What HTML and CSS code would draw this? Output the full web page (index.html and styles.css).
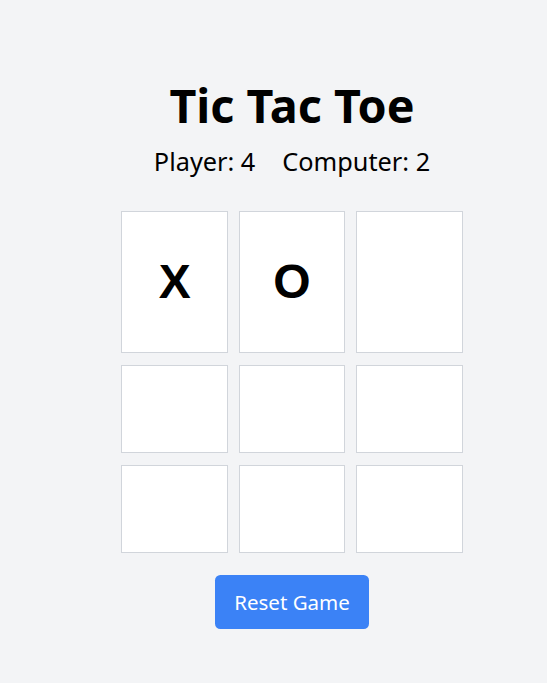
FILE: index.html
```html
<!DOCTYPE html>
<html lang="en">
<head>
<meta charset="utf-8">
<title>Tic Tac Toe</title>
<link rel="stylesheet" href="styles.css">
</head>
<body>
<main class="app">
  <h1 class="title">Tic Tac Toe</h1>
  <div class="score">
    <span class="score-item">Player: 4</span>
    <span class="score-item">Computer: 2</span>
  </div>
  <div class="board">
    <button class="cell">X</button>
    <button class="cell">O</button>
    <button class="cell"></button>
    <button class="cell"></button>
    <button class="cell"></button>
    <button class="cell"></button>
    <button class="cell"></button>
    <button class="cell"></button>
    <button class="cell"></button>
  </div>
  <button class="reset">Reset Game</button>
</main>
</body>
</html>
```

FILE: styles.css
```css
html, body {
  margin: 0;
  padding: 0;
  background: #f3f4f6;
  height: 100%;
}

body {
  font-family: "Noto Sans", "Open Sans", sans-serif;
  color: #000;
}

.app {
  display: flex;
  flex-direction: column;
  align-items: center;
  padding: 79.4px 0 0 37px;
}

.title {
  margin: 0 0 10.7px;
  font-size: 46.7px;
  line-height: 53px;
  font-weight: 700;
}

.score {
  display: flex;
  gap: 27px;
  font-size: 25.3px;
  line-height: 37.33px;
  margin-bottom: 30.5px;
}

.board {
  display: grid;
  grid-template-columns: repeat(3, 106.67px);
  column-gap: 10.67px;
  row-gap: 11.4px;
}

.cell {
  box-sizing: border-box;
  width: 106.67px;
  padding: 43.33px 0;
  margin: 0;
  background: #fff;
  border: 1px solid #d1d5db;
  font-family: "Liberation Sans", Arial, sans-serif;
  font-size: 48px;
  line-height: 53.67px;
  font-weight: 700;
  color: #000;
  cursor: pointer;
}

.reset {
  margin-top: 21.7px;
  padding: 11px 19.7px;
  border: none;
  border-radius: 5.33px;
  background: #3b82f6;
  color: #fff;
  font-family: "Noto Sans", "Open Sans", sans-serif;
  font-size: 20.5px;
  line-height: 32px;
  cursor: pointer;
}
```
